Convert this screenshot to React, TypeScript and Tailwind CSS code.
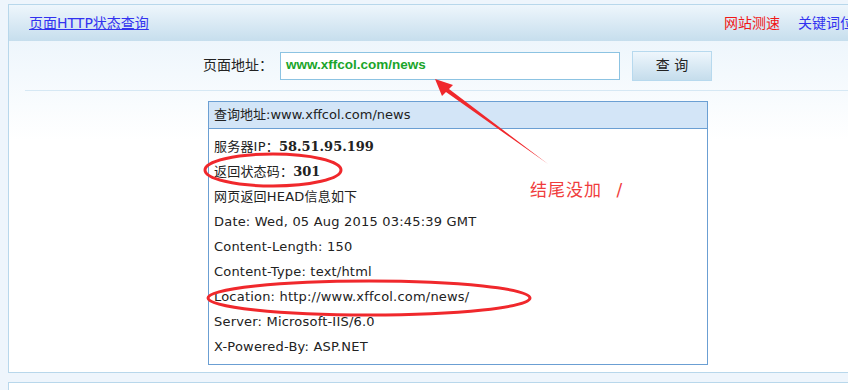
import React from "react"

const cjk = "font-['DejaVu_Sans','Noto_Sans_CJK_SC',sans-serif]"

const rows: { label: string; value?: string; bold?: boolean }[] = [
  { label: "服务器IP：", value: "58.51.95.199", bold: true },
  { label: "返回状态码：", value: "301", bold: true },
  { label: "网页返回HEAD信息如下" },
  { label: "Date: Wed, 05 Aug 2015 03:45:39 GMT" },
  { label: "Content-Length: 150" },
  { label: "Content-Type: text/html" },
  { label: "Location: http://www.xffcol.com/news/" },
  { label: "Server: Microsoft-IIS/6.0" },
  { label: "X-Powered-By: ASP.NET" },
]

function Annotations() {
  return (
    <svg className="absolute left-0 top-0 pointer-events-none" width="848" height="390">
      <ellipse cx="273" cy="170" rx="68" ry="16" fill="none" stroke="#f0282c" strokeWidth="3" />
      <ellipse cx="369" cy="298" rx="161" ry="17" fill="none" stroke="#f0282c" strokeWidth="3" />
      <polygon points="548,164 449,89 453,85 435,79 442,96 446,92" fill="#f0282c" />
    </svg>
  )
}

export default function App() {
  return (
    <div className={`relative w-[848px] h-[390px] overflow-hidden bg-[#eef5fc] ${cjk}`}>
      <div className="ml-2 mt-1 w-[900px] border border-[#b8d7eb] bg-white">
        {/* header bar */}
        <div className="h-9 flex items-center bg-gradient-to-b from-[#eef6fc] to-[#c6deed]">
          <a className="ml-5 text-[14px] text-[#3232f0] underline">页面HTTP状态查询</a>
          <a className="ml-auto text-[14px] text-[#f01818]">网站测速</a>
          <a className="ml-[18px] mr-[39px] text-[14px] text-[#3232f0]">关键词位置</a>
        </div>

        {/* body */}
        <div className="h-[331px] bg-gradient-to-b from-[#eef6fc] to-white to-[30%]">
          <div className="flex items-center pt-[5px] h-[44px]">
            <span className="ml-[194px] text-[14px] text-[#222]">页面地址：</span>
            <div className="ml-[7px] w-[340px] h-[28px] border border-[#8cc3e2] bg-white flex items-center pl-[5px]">
              <span className="text-[13.5px] font-bold text-[#1aa52a] font-['Liberation_Sans',sans-serif]">www.xffcol.com/news</span>
            </div>
            <button className="ml-[12px] w-[80px] h-[30px] border border-[#b7d9ee] bg-gradient-to-b from-[#eef6fc] to-[#c5ddec] text-[14px] text-[#222]">
              查 询
            </button>
          </div>
          <div className="ml-4 mt-[5px] h-0 border-t border-[#d6e8f4]" />

          <div className="ml-[199px] mt-[10px] w-[500px] h-[264px] border border-[#6b9fd3] bg-white text-[13px] text-[#222]">
            <div className="h-[27px] bg-[#d3e5f7] border-b border-[#6b9fd3] flex items-center pl-[5px]">
              查询地址:www.xffcol.com/news
            </div>
            <div className="pt-[5px] pl-[5px]">
              {rows.map((r) => (
                <div key={r.label} className="h-[25px] leading-[25px] whitespace-nowrap tracking-[0.2px]">
                  {r.label}
                  {r.value && <b className="font-bold tracking-normal font-['DejaVu_Serif',serif]">{r.value}</b>}
                </div>
              ))}
            </div>
          </div>
        </div>
      </div>

      <div className="ml-2 mt-[9px] w-[900px] h-[20px] border border-[#b8d7eb] bg-white" />

      <div className="absolute left-[530px] top-[178px] text-[17px] text-[#f03c3c] tracking-[1px]">
        结尾没加 <span className="ml-2">/</span>
      </div>
      <Annotations />
    </div>
  )
}
